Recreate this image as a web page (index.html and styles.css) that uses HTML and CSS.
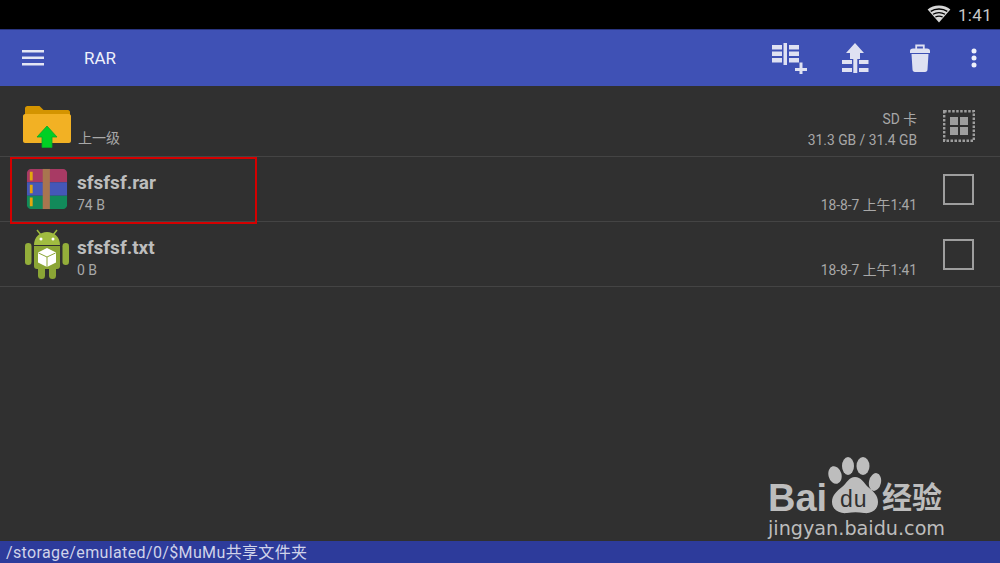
FILE: index.html
```html
<!DOCTYPE html>
<html lang="en">
<head>
    <meta charset="UTF-8">
    <title>RAR</title>
    <link rel="stylesheet" href="styles.css">
</head>
<body>
    <div class="status-bar">
        <svg class="wifi" width="24" height="18" viewBox="0 0 24 18">
            <path d="M12 17.5 0.6 4.4C3.6 1.900 7.600 0.400 12 0.400s8.400 1.500 11.400 4z" fill="#d8d8d8"/>
            <path d="M3.700 6.400C5.900 4.900 8.800 4 12 4s6.100.9 8.300 2.400M6 9.200c1.700-1 3.700-1.600 6-1.600s4.300.6 6 1.600M8.300 12c1-.5 2.300-.9 3.700-.9s2.700.4 3.700.9" fill="none" stroke="#000" stroke-width="1.300"/>
        </svg>
        <span class="clock">1:41</span>
    </div>

    <header class="app-bar">
        <svg class="menu-icon" width="22" height="16" viewBox="0 0 22 16">
            <path d="M0 0h22v2.500H0zM0 6.500h22V9H0zM0 13h22v2.500H0z" fill="#e4e6f4"/>
        </svg>
        <div class="app-title">RAR</div>
        <div class="actions">
            <svg class="action action-add" width="36" height="32" viewBox="0 0 36 32">
                <path d="M1 3h10v4.500H1zM1 9.500h10V14H1zM1 16h10v4.500H1zM12.500 1H16v22h-3.500zM18 3h10v4.500H18zM18 9.500h10V14H18zM18 16h10v4.500H18zM28.500 20.500h3V26H36v3h-4.500v4.500h-3V29H24v-3h4.500z" fill="#dfe1f2"/>
            </svg>
            <svg class="action" width="27" height="30" viewBox="0 0 27 30">
                <path d="M13 0l9 10h-4v6H8v-6H4zM0 17h10v4H0zM17 17h9.500v4H17zM0 25h10v4H0zM17 25h9.500v4H17zM11.300 16h4v14h-4z" fill="#dfe1f2"/>
            </svg>
            <svg class="action" width="20" height="28" viewBox="0 0 20 28">
                <path d="M6.200 5V1.500h7.600V5" fill="none" stroke="#dfe1f2" stroke-width="1.800"/>
                <path d="M0 7c0-1.500 1-2.500 3-2.500h14c2 0 3 1 3 2.500v2H0zM1.500 10h17l-1 15.500c0 1.500-1 2.500-2.500 2.500H5c-1.500 0-2.500-1-2.500-2.500z" fill="#dfe1f2"/>
            </svg>
            <svg class="action" width="6" height="20" viewBox="0 0 6 20">
                <circle cx="3" cy="3" r="2.500" fill="#eef0fa"/>
                <circle cx="3" cy="10" r="2.500" fill="#eef0fa"/>
                <circle cx="3" cy="17" r="2.500" fill="#eef0fa"/>
            </svg>
        </div>
    </header>

    <main class="file-list">
        <div class="row row-up">
            <svg class="file-icon" width="48" height="42" viewBox="0 0 48 42">
                <path d="M2 2.500C2 1 3 0 4.500 0h12l4 4H45c1 0 2 1 2 2v4H2z" fill="#d49400"/>
                <path d="M0 10c0-1 1-2 2-2h44c1 0 2 1 2 2v25c0 1-1 2-2 2H2c-1 0-2-1-2-2z" fill="#f2b124"/>
                <path d="M24 20l10 11h-5v10.500h-10V31h-5z" fill="#00d024" stroke="#0aa52a" stroke-width=".8"/>
            </svg>
            <div class="file-text up-text">
                <div class="file-meta">上一级</div>
            </div>
            <div class="file-right">
                <div>SD 卡</div>
                <div>31.3 GB / 31.4 GB</div>
            </div>
            <svg class="select-all" width="32" height="32" viewBox="0 0 32 32">
                <rect x="1.200" y="1.200" width="29.600" height="29.600" fill="none" stroke="#9e9e9e" stroke-width="2.400" stroke-dasharray="2.500 1.500"/>
                <path d="M7 7h8v8H7zM17 7h8v8h-8zM7 17h8v8H7zM17 17h8v8h-8z" fill="#9e9e9e"/>
            </svg>
        </div>

        <div class="row">
            <svg class="file-icon" width="42" height="42" viewBox="-1 -0.500 44 43">
                <path d="M0 14V4c0-2 2-4 4-4h34c2 0 4 2 4 4v10z" fill="#a83a64"/>
                <path d="M0 14h42v14H0z" fill="#4557b8"/>
                <path d="M0 28h42v10c0 2-2 4-4 4H4c-2 0-4-2-4-4z" fill="#128a5a"/>
                <path d="M16.500 0h7.500v42h-7.500z" fill="#a8754f"/>
                <path d="M3 3h3v9H3zM3 16.500h3v9H3zM3 30h3v9H3z" fill="#e2a80e"/>
            </svg>
            <div class="file-text">
                <div class="file-name">sfsfsf.rar</div>
                <div class="file-meta">74 B</div>
            </div>
            <div class="file-right">
                <div>18-8-7 上午1:41</div>
            </div>
            <div class="checkbox"></div>
        </div>

        <div class="row">
            <svg class="file-icon" width="44" height="50" viewBox="0 0 44 50">
                <path d="M12 1l4 5M32 1l-4 5" stroke="#9cba3c" stroke-width="1.500"/>
                <path d="M9 16C9 8 15 3 22 3s13 5 13 13z" fill="#a0bc40"/>
                <circle cx="16" cy="10" r="1.500" fill="#fff"/>
                <circle cx="28" cy="10" r="1.500" fill="#fff"/>
                <path d="M9 17h26v20c0 2-1 3-3 3H12c-2 0-3-1-3-3z" fill="#8ba535"/>
                <rect x="0" y="14" width="6.500" height="22" rx="3.200" fill="#93ae3a"/>
                <rect x="37.500" y="14" width="6.500" height="22" rx="3.200" fill="#93ae3a"/>
                <rect x="13" y="36" width="7" height="14" rx="3.500" fill="#8ba535"/>
                <rect x="24" y="36" width="7" height="14" rx="3.500" fill="#8ba535"/>
                <path d="M22 19l9 4.500v10L22 38l-9-4.500v-10z" fill="#fff"/>
                <path d="M13.500 24l8.500 4 8.500-4M22 28v10" fill="none" stroke="#8ba535" stroke-width="1"/>
            </svg>
            <div class="file-text">
                <div class="file-name">sfsfsf.txt</div>
                <div class="file-meta">0 B</div>
            </div>
            <div class="file-right">
                <div>18-8-7 上午1:41</div>
            </div>
            <div class="checkbox"></div>
        </div>
    </main>

    <div class="path-bar">/storage/emulated/0/$MuMu共享文件夹</div>

    <div class="highlight"></div>

    <div class="watermark">
        <svg class="paw" width="54" height="58" viewBox="0 0 54 58">
            <ellipse cx="7" cy="18" rx="6.500" ry="9" fill="#bdbdbd" transform="rotate(-15 7 18)"/>
            <ellipse cx="20" cy="9" rx="6" ry="9" fill="#bdbdbd"/>
            <ellipse cx="35" cy="9" rx="6.500" ry="9" fill="#bdbdbd"/>
            <ellipse cx="47" cy="25" rx="6" ry="9" fill="#bdbdbd" transform="rotate(12 47 25)"/>
            <path d="M27 20c6 0 9 6 13 10 5 4 10 8 10 15 0 8-7 12-14 11-6-1-11-1-17 0-7 1-15-3-15-11 0-7 5-11 10-15 5-4 7-10 13-10z" fill="#bdbdbd"/>
        </svg>
        <div class="mark-top">
            <span class="mark-bai">Bai</span>
            <span class="mark-du">du</span>
            <span class="mark-cn">经验</span>
        </div>
        <div class="mark-url">jingyan.baidu.com</div>
    </div>
</body>
</html>
```

FILE: styles.css
```css
body {
    margin: 0;
    width: 1000px;
    height: 563px;
    background-color: #303030;
    overflow: hidden;
    position: relative;
    display: flex;
    flex-direction: column;
    font-family: Roboto, "Noto Sans CJK SC", sans-serif;
}
.status-bar {
    height: 29px;
    background-color: #000;
    display: flex;
    justify-content: flex-end;
    align-items: center;
    gap: 7px;
    padding-right: 8px;
}
.wifi {
    margin-top: -1px;
}
.clock {
    color: #c8c8c8;
    font-size: 17px;
    letter-spacing: .3px;
}
.app-bar {
    height: 57px;
    border-top: 1px solid #2a3580;
    box-sizing: border-box;
    background-color: #3f51b5;
    display: flex;
    align-items: center;
    padding-left: 22px;
}
.menu-icon {
    margin-right: 40px;
}
.app-title {
    color: #eef0fa;
    font-size: 17px;
}
.actions {
    margin-left: auto;
    display: flex;
    align-items: center;
    gap: 41px;
    padding-right: 23px;
}
.action {
    flex: none;
}
.action-add {
    margin-right: -6px;
}
.file-list {
    flex: 1;
}
.row {
    height: 64px;
    border-bottom: 1px solid #444;
    display: flex;
    align-items: center;
    padding-left: 26px;
}
.row-up {
    height: 70px;
    padding-left: 23px;
}
.file-icon {
    flex: none;
    width: 42px;
    margin-right: 9px;
}
.row:last-child .file-icon {
    width: 44px;
    margin-left: -1px;
    margin-right: 8px;
}
.row-up .file-icon {
    width: 48px;
    margin-right: 7px;
    margin-top: 12px;
}
.file-text {
    flex: 1;
    align-self: stretch;
    display: flex;
    flex-direction: column;
    justify-content: flex-end;
    padding-bottom: 7px;
}
.up-text {
    padding-bottom: 9px;
}
.file-name {
    color: #bdbdbd;
    font-size: 19px;
    font-weight: 700;
    line-height: 26px;
}
.file-meta {
    color: #a8a8a8;
    font-size: 14px;
    line-height: 18px;
}
.file-right {
    color: #a8a8a8;
    font-size: 13.800px;
    line-height: 21px;
    text-align: right;
    align-self: flex-end;
    padding-bottom: 5px;
    margin-right: 26px;
}
.checkbox {
    width: 27px;
    height: 27px;
    border: 2px solid #9e9e9e;
    margin-right: 26px;
    flex: none;
}
.select-all {
    margin-right: 25px;
    margin-top: 10px;
    flex: none;
}
.path-bar {
    height: 22px;
    background-color: #2d3b9b;
    color: #d0d3ea;
    font-size: 16px;
    letter-spacing: .37px;
    line-height: 24px;
    padding-left: 6px;
}
.highlight {
    position: absolute;
    left: 10px;
    top: 157px;
    width: 243px;
    height: 63px;
    border: 2px solid #d40000;
}
.watermark {
    position: absolute;
    left: 768px;
    top: 456px;
    width: 180px;
    height: 84px;
    color: #bdbdbd;
}
.paw {
    position: absolute;
    left: 60px;
    top: 1px;
}
.mark-top {
    position: absolute;
    left: 0;
    top: 20px;
}
.mark-bai {
    position: absolute;
    left: 0;
    top: 0;
    font-family: "Liberation Sans", sans-serif;
    font-size: 38px;
    font-weight: 700;
    line-height: 44px;
}
.mark-du {
    position: absolute;
    left: 72px;
    top: 9px;
    color: #303030;
    font-family: "Liberation Sans", sans-serif;
    font-size: 23px;
    letter-spacing: 1px;
    line-height: 28px;
}
.mark-cn {
    position: absolute;
    left: 114px;
    top: 1px;
    width: 70px;
    font-family: "Noto Sans CJK SC", sans-serif;
    font-size: 30px;
    font-weight: 700;
    line-height: 36px;
}
.mark-url {
    position: absolute;
    left: 0;
    top: 61px;
    font-family: "DejaVu Sans", sans-serif;
    font-size: 19.200px;
    line-height: 24px;
    white-space: nowrap;
}
```
